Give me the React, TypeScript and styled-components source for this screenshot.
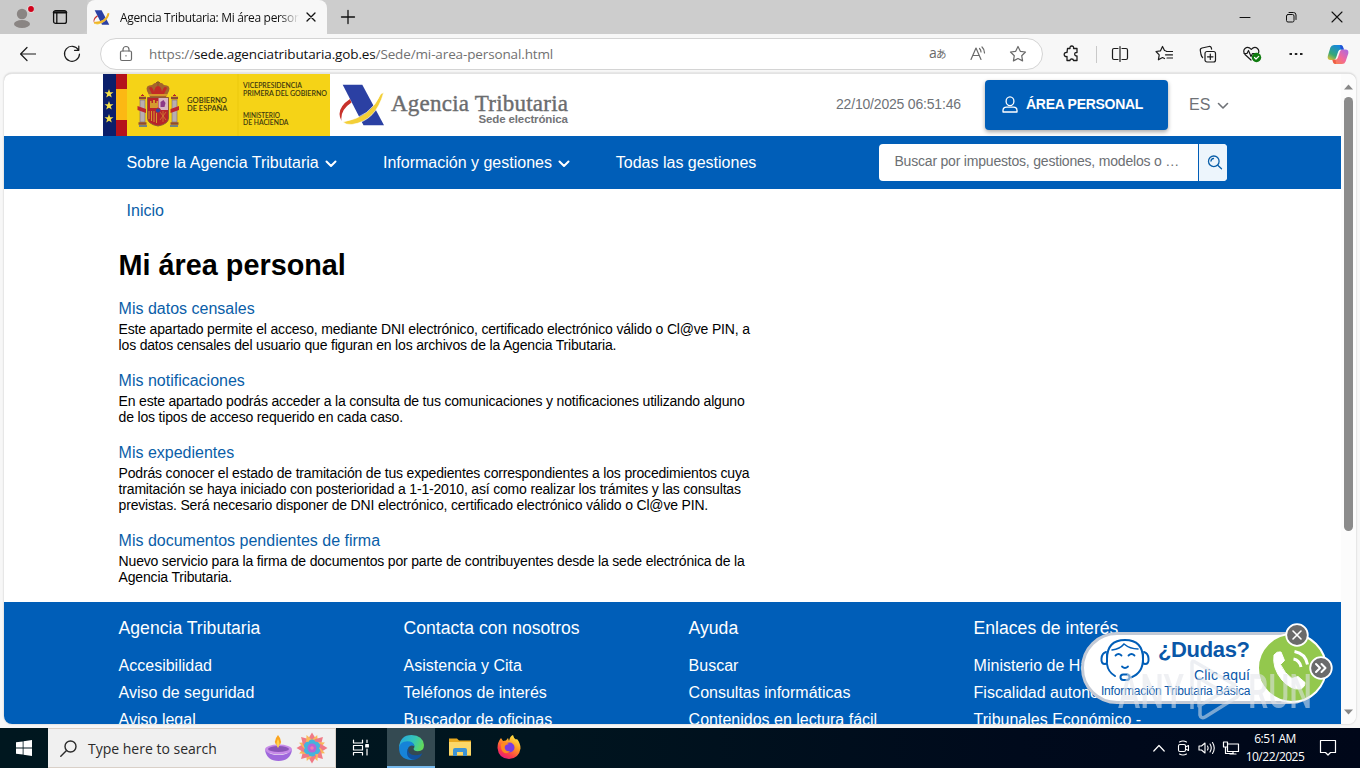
import React from "react";
import styled, { createGlobalStyle } from "styled-components";

const GlobalStyle = createGlobalStyle`
  * { box-sizing: border-box; }
  body {
    margin: 0;
    overflow: hidden;
    font-family: "Liberation Sans", Arial, sans-serif;
  }
`;

const BLUE = "#005eb8";
const UI_FONT = `"Open Sans", "Noto Sans", sans-serif`;

const Screen = styled.div`
  width: 1360px;
  height: 768px;
  display: flex;
  flex-direction: column;
  background: #f7f7f7;
  overflow: hidden;
`;

/* ---------- browser chrome ---------- */

const TabStrip = styled.div`
  height: 34px;
  display: flex;
  align-items: center;
  background: #cdcdcd;
  color: #111;
  font-family: ${UI_FONT};
`;

const Cell = styled.div<{ $w: number }>`
  width: ${(p) => p.$w}px;
  height: 100%;
  flex: none;
  display: flex;
  align-items: center;
  justify-content: center;
`;

const Profile = styled.div`
  width: 87px;
  height: 34px;
  display: flex;
  background: #c9c9c9;
  border-bottom-right-radius: 7px;
`;

const Tab = styled.div`
  width: 240px;
  height: 34px;
  display: flex;
  align-items: center;
  padding: 0 5px 0 6px;
  background: #f7f7f7;
  border-radius: 8px 8px 0 0;
`;

const TabTitle = styled.div`
  width: 180px;
  margin-left: 10px;
  overflow: hidden;
  white-space: nowrap;
  font-size: 12px;
  letter-spacing: -0.33px;
  mask-image: linear-gradient(90deg, #000 160px, transparent 179px);
`;

const WindowButtons = styled.div`
  display: flex;
  height: 100%;
  margin-left: auto;
`;

const Toolbar = styled.div`
  height: 39px;
  display: flex;
  align-items: center;
  padding: 1px 0 0 6px;
  color: #1b1b1b;
`;

const AddressBar = styled.div`
  width: 943px;
  height: 32px;
  display: flex;
  align-items: center;
  margin: 0 6px 0 6px;
  padding: 0 4px 0 16px;
  background: #fff;
  border: 1px solid #d4d4d4;
  border-radius: 16px;
  color: #6a6a6a;
  font-family: ${UI_FONT};
`;

const Url = styled.div`
  flex: 1;
  margin-left: 14px;
  font-size: 13.5px;
  letter-spacing: -0.13px;
  white-space: nowrap;
  color: #717171;

  b {
    font-weight: 400;
    color: #111;
  }
`;

const Divider = styled.div`
  width: 1px;
  height: 17px;
  margin: 0 0 0 3px;
  background: #c9c9c9;
`;

/* ---------- page ---------- */

const Viewport = styled.div`
  position: relative;
  height: 651px;
  margin: 0 4px;
  display: flex;
  overflow: hidden;
  background: #fff;
  border-top: 1px solid #e3e3e3;
  border-radius: 8px;
  box-shadow: 0 0 2px #bbb;
`;

const Page = styled.div`
  width: 1337px;
  overflow: hidden;
`;

const ScrollTrack = styled.div`
  width: 15px;
  display: flex;
  flex-direction: column;
  align-items: center;
  justify-content: space-between;
  padding: 10px 0 9px;
  background: #fcfcfc;
`;

const ScrollThumb = styled.div`
  width: 9px;
  height: 434px;
  margin: 7px 0 auto;
  border-radius: 5px;
  background: #8b8b8b;
`;

const Header = styled.header`
  height: 62px;
  display: flex;
  align-items: center;
  padding-left: 99px;
`;

const Clock = styled.div`
  width: 149px;
  margin-left: 266px;
  padding-bottom: 2px;
  font-size: 14px;
  letter-spacing: -0.19px;
  color: #6f7277;
`;

const PersonalButton = styled.button`
  width: 183px;
  height: 50px;
  display: flex;
  align-items: center;
  gap: 8px;
  padding: 0 0 2px 17px;
  border: 0;
  border-radius: 4px;
  background: ${BLUE};
  box-shadow: 0 2px 4px rgba(0, 0, 0, 0.35);
  color: #fff;
  font: bold 14px "Liberation Sans", Arial, sans-serif;
  letter-spacing: -0.29px;
  white-space: nowrap;
`;

const Language = styled.div`
  display: flex;
  align-items: center;
  gap: 7px;
  margin-left: 21px;
  font-size: 16px;
  color: #6f7277;
`;

const Nav = styled.nav`
  height: 53px;
  display: flex;
  align-items: center;
  padding-left: 122.6px;
  background: ${BLUE};
  color: #fff;
`;

const NavItem = styled.div<{ $w: number }>`
  width: ${(p) => p.$w}px;
  display: flex;
  align-items: center;
  gap: 6px;
  font-size: 16px;
  white-space: nowrap;
`;

const SearchBox = styled.div`
  width: 348px;
  height: 37px;
  display: flex;
  border-radius: 4px;
  overflow: hidden;
  background: #fff;
`;

const SearchInput = styled.div`
  width: 320px;
  padding: 0 0 3px 15.5px;
  display: flex;
  align-items: center;
  border-right: 1px solid ${BLUE};
  font-size: 14px;
  letter-spacing: -0.2px;
  color: #6c6f73;
  white-space: nowrap;
`;

const SearchButton = styled.div`
  flex: 1;
  display: flex;
  align-items: center;
  justify-content: center;
  background: #edf5fc;
  padding-left: 4px;
`;

const Breadcrumb = styled.div`
  height: 42px;
  padding-left: 122.6px;
  font-size: 16px;
  line-height: 43px;
  color: #0a5ea8;
`;

const Main = styled.main`
  height: 371px;
  padding: 16px 0 0 114.6px;
`;

const Title = styled.h1`
  margin: 0 0 16px;
  font-size: 28.8px;
  line-height: 36px;
  color: #000;
`;

const Entry = styled.section`
  width: 660px;
  margin-bottom: 18px;
`;

const EntryLink = styled.a`
  display: block;
  margin-bottom: 2px;
  font-size: 16px;
  line-height: 20px;
  color: #0a5ea8;
`;

const EntryText = styled.p`
  margin: 0;
  font-size: 14px;
  letter-spacing: -0.181px;
  line-height: 16px;
  white-space: pre-line;
  color: #000;
`;

const Footer = styled.footer`
  height: 130px;
  display: grid;
  grid-template-columns: repeat(4, 285px);
  padding: 15px 0 0 114.6px;
  background: ${BLUE};
  color: #fff;
`;

const FooterTitle = styled.div`
  height: 35px;
  font-size: 17.6px;
  line-height: 22px;
`;

const FooterLink = styled.div`
  font-size: 16px;
  line-height: 27px;
`;

/* floating help pill, over the footer */

const HelpPill = styled.div`
  position: absolute;
  left: 1076px;
  top: 547px;
  width: 256px;
  height: 104px;

  svg {
    display: block;
  }
`;

/* ---------- taskbar ---------- */

const Taskbar = styled.div`
  height: 40px;
  margin-top: 4px;
  display: flex;
  background: linear-gradient(90deg, #00171f 0%, #00151f 40%, #000a1c 75%, #000719 100%);
  color: #fff;
  font-family: ${UI_FONT};
`;

const TaskSearch = styled.div`
  width: 288px;
  display: flex;
  align-items: center;
  padding: 0 7px 0 12px;
  background: #f0f0f0;
  border: 1px solid #d9d0c8;
  border-left: 0;
  color: #2b2b2b;
  font-size: 14px;
`;

const TaskLabel = styled.span`
  flex: 1;
  margin-left: 11px;
  white-space: nowrap;
`;

const TaskApp = styled.div<{ $active?: boolean }>`
  width: ${(p) => (p.$active ? 48 : 49)}px;
  height: 40px;
  display: flex;
  align-items: center;
  justify-content: center;
  background: ${(p) => (p.$active ? "#344a52" : "transparent")};
  border-bottom: 2px solid ${(p) => (p.$active ? "#76b9ed" : "transparent")};
`;

const Tray = styled.div`
  display: flex;
  margin-left: auto;
`;

const TrayClock = styled.div`
  width: 64px;
  padding: 2px 0 0 0;
  font-size: 12px;
  line-height: 18px;
  letter-spacing: -0.5px;
  text-align: center;
  white-space: nowrap;
`;

type IconProps = {
  size?: number;
  w?: number;
  stroke?: number;
  children: React.ReactNode;
};

const Icon = ({ size = 18, w = size, stroke = 1.2, children }: IconProps) => (
  <svg
    width={w}
    height={size}
    viewBox={`0 0 ${w} ${size}`}
    fill="none"
    stroke="currentColor"
    strokeWidth={stroke}
    strokeLinecap="round"
    strokeLinejoin="round"
  >
    {children}
  </svg>
);

const Chevron = ({ stroke = 2 }: { stroke?: number }) => (
  <Icon size={12} stroke={stroke}>
    <path d="M1.500 4.500l4.500 4.500L10.500 4.500" />
  </Icon>
);

const GovLogo = () => (
  <svg width="227" height="62" viewBox="0 0 227 62">
    <rect width="227" height="62" fill="#f5d317" />
    <path d="M135 0v62" stroke="#ebc90f" />
    <rect width="13" height="62" fill="#0b1f6b" />
    {[19.5, 31.5, 44.5].map((y) => (
      <path
        key={y}
        transform={`translate(6 ${y})`}
        d="M0-4.500l1.100 3.200 3.400.1-2.700 2 1 3.300L0 2.200l-2.800 1.900 1-3.300-2.700-2 3.400-.1z"
        fill="#f4e04a"
      />
    ))}
    <rect x="13" width="11" height="62" fill="#b5121b" />
    <rect x="13" y="15" width="11" height="31" fill="#fcb813" />

    {/* coat of arms */}
    <g>
      <path d="M44 17q-2-6 5-6 3-3 6-2 4-1 6 2 7 0 5 6l-3 6H47z" fill="#a5642c" />
      <path d="M46 14q3-3 5 4 1-6 4-6t4 6q2-7 5-4l-3 6H49z" fill="#c22a26" />
      <path d="M55 7v5M53 8.500h4" stroke="#8a5a28" strokeWidth="1.200" />
      <path d="M46 21h18" stroke="#d8952b" strokeWidth="2" />
      <path d="M44.500 23.500h21V44q0 6-10.500 8-10.500-2-10.500-8z" fill="#b8242a" stroke="#8f5a35" />
      <path d="M55.500 24h9.500v12h-9.500z" fill="#d8b4c2" />
      <path d="M57.500 33v-5l3-2 2 3-1 4z" fill="#8c3a86" />
      <path d="M47 34v-7h1.500v2h1.500v-3h2v3h1.500v-2H55v7z" fill="#d59a2e" />
      <path d="M46 37v8M48.500 37v10M51 37v11M53.500 37v12" stroke="#d59a2e" strokeWidth="1" />
      <path d="M57 38l6 8M63 38l-6 8M60 37v11" stroke="#cd7f30" strokeWidth=".8" />
      <circle cx="55" cy="36.500" r="2.500" fill="#31479c" stroke="#c22" strokeWidth=".8" />
      <path d="M37 26h5v22h-5zM69 26h5v22h-5z" fill="#b9aeb0" stroke="#7d6a70" strokeWidth=".6" />
      <path d="M34.500 32l8.500 3v4l-8.500-3zM67.500 35l8.500-3v4l-8.500 3z" fill="#bd2730" />
      <path d="M36 24h7M68 24h7M35.500 49.500h8M67.500 49.500h8" stroke="#8d4a36" strokeWidth="2.500" />
      <path d="M36 52h8M67 52h8" stroke="#4a6ba8" strokeWidth="1.500" />
      <path d="M38 22q1.500-3 3 0M70 22q1.500-3 3 0" fill="#b8242a" stroke="#b8242a" />
    </g>

    <g fontFamily="Lato, sans-serif" fontSize="7.400" fontWeight="600" fill="#3d380f">
      <text x="84" y="29" textLength="40" lengthAdjust="spacingAndGlyphs">GOBIERNO</text>
      <text x="84" y="36.700" textLength="40.500" lengthAdjust="spacingAndGlyphs">DE ESPAÑA</text>
      <text x="140" y="13.600" textLength="59" lengthAdjust="spacingAndGlyphs">VICEPRESIDENCIA</text>
      <text x="140" y="21.500" textLength="84" lengthAdjust="spacingAndGlyphs">PRIMERA DEL GOBIERNO</text>
      <text x="140" y="43.600" textLength="37" lengthAdjust="spacingAndGlyphs">MINISTERIO</text>
      <text x="140" y="51.300" textLength="45.500" lengthAdjust="spacingAndGlyphs">DE HACIENDA</text>
    </g>
  </svg>
);

const AgencyMark = () => (
  <>
    <path d="M4.700 10.700h19.600L46 51.300H25.500z" fill="#2b40a3" />
    <path d="M12 25Q-3 35 3.500 47q-1.500-11 10-18.500z" fill="#c8322b" />
    <path
      d="M45.700 18.500l-3 1.500Q33 43 5 48q3 3 9 2.500Q38 47 45.700 18.500z"
      fill="#f3cf37"
      stroke="#fff"
      strokeWidth=".6"
    />
  </>
);

const AgencyLogo = () => (
  <svg width="232" height="62" viewBox="0 0 232 62" style={{ marginLeft: 8 }}>
    <AgencyMark />
    <text
      x="53"
      y="37.300"
      fontFamily="Liberation Serif, serif"
      fontSize="23"
      fill="#6b6c6e"
      stroke="#6b6c6e"
      strokeWidth=".4"
      textLength="177"
    >
      Agencia Tributaria
    </text>
    <text
      x="140.500"
      y="49"
      fontFamily="Liberation Sans, sans-serif"
      fontSize="11.500"
      fontWeight="700"
      fill="#737477"
      textLength="89.500"
    >
      Sede electrónica
    </text>
  </svg>
);

const HelpWidget = () => (
  <HelpPill>
    <svg width="256" height="104" viewBox="1080 621 256 104">
      <rect x="1082.500" y="633.500" width="242" height="69" rx="34.500" fill="#fff" stroke="#c3cad6" strokeWidth="3" />
      <circle cx="1292" cy="668" r="34" fill="#93c84d" stroke="#fff" strokeWidth="2" />

      {/* operator face */}
      <g fill="none" stroke={BLUE} strokeWidth="2" strokeLinecap="round">
        <path d="M1107 659q0-19 18-19t18 19q0 14-12 18.500" />
        <path d="M1106 652q-4 1-4.500 6.500t3.500 5.500q2 0 2-2v-8M1144 652q4 1 4.500 6.500t-3.500 5.500q-2 0-2-2v-8" />
        <path d="M1107 664q1 8 8 12" />
        <path d="M1112 650q8-1 12-6 6 5 14 5" strokeWidth="1.500" />
        <path d="M1115.500 655.500q3-3 6 0M1128.500 655.500q3-3 6 0M1122 666.500q3 3 6 0" strokeWidth="1.800" />
        <rect x="1120.500" y="674.500" width="9" height="5.500" rx="2.700" />
      </g>

      <g fontFamily="Liberation Sans, sans-serif" fill="#0a57a8">
        <text x="1158" y="656.500" fontSize="22" fontWeight="700" textLength="92">¿Dudas?</text>
        <text x="1194" y="680" fontSize="14" textLength="56">Clic aquí</text>
        <text x="1101" y="695" fontSize="12" textLength="149.500">Información Tributaria Básica</text>
      </g>

      {/* handset */}
      <path
        d="M1274 655q3-4 7-3l3.500 8.500-4 4q4 9 11.500 14l6-2 7 6q0 5-5 6.500-9 1-18-9-10-12-8-25z"
        fill="#fff"
        stroke="#fff"
        strokeLinejoin="round"
      />
      <path d="M1293.500 659q6 1 7.500 8M1294.500 651.500q11 2 13 13" fill="none" stroke="#fff" strokeWidth="3" />

      {/* ANY.RUN watermark */}
      <g opacity=".55" fill="#e2e5eb">
        <g fontFamily="Roboto, sans-serif" fontSize="49" fontWeight="500">
          <text x="1118" y="707.500" textLength="66" lengthAdjust="spacingAndGlyphs">ANY</text>
          <text x="1248" y="707.500" textLength="64" lengthAdjust="spacingAndGlyphs">RUN</text>
        </g>
        <g fill="none" stroke="#dfe3ea" strokeWidth="3.500" strokeLinejoin="round">
          <path d="M1192 709v-46q0-3 3-1l40 23-36 21v-28l20 12" />
          <path d="M1200 706v9q1 4 5 2l32-20q3-3 0-6l-7-4" />
        </g>
      </g>

      <g stroke="#fff" strokeLinecap="round" strokeLinejoin="round" fill="none">
        <circle cx="1297" cy="635" r="10.800" fill="#6b6b6b" strokeWidth="1.800" />
        <path d="M1293 631l8 8M1301 631l-8 8" strokeWidth="1.600" />
        <circle cx="1321" cy="668" r="10.800" fill="#6b6b6b" strokeWidth="1.800" />
        <path d="M1316 664l4 4-4 4M1321.500 664l4 4-4 4" strokeWidth="2" />
      </g>
    </svg>
  </HelpPill>
);

const CopilotIcon = () => (
  <svg width="22" height="21" viewBox="0 0 22 21">
    <defs>
      <linearGradient id="cpA" x1="0" y1="1" x2=".6" y2="0">
        <stop offset="0" stopColor="#f5c52e" />
        <stop offset=".4" stopColor="#37a877" />
        <stop offset="1" stopColor="#1587e0" />
      </linearGradient>
      <linearGradient id="cpB" x1="1" y1="0" x2="0" y2="1">
        <stop offset="0" stopColor="#a468e8" />
        <stop offset=".5" stopColor="#f2679c" />
        <stop offset="1" stopColor="#f98a3a" />
      </linearGradient>
    </defs>
    <path d="M7 1h6.500q2 0 2.500 2l.8 2.500h-3q-2 0-2.600 2L9 14q-.6 2-2.500 2H3.500Q0 16 .8 12l2.600-8.500Q4.300 1 7 1z" fill="url(#cpA)" />
    <path d="M15 20H8.500Q6.500 20 6 18l-.5-2.300h2.700q2 0 2.600-2L13 7.500q.6-2 2.500-2H18.500q3.500 0 2.800 4L18.600 17.500Q17.700 20 15 20z" fill="url(#cpB)" />
    <path d="M13 1q2.500 0 3 2l.8 2.500h-3z" fill="#2450d8" />
    <path d="M5.500 15.700h3L9 20q-2.500 0-3-2z" fill="#ee5b46" />
  </svg>
);

const EdgeIcon = () => (
  <svg width="25" height="25" viewBox="0 0 24 24">
    <defs>
      <linearGradient id="edA" x1="0" x2="1" y1=".2" y2=".5">
        <stop offset="0" stopColor="#25a8e0" />
        <stop offset=".6" stopColor="#36c6b5" />
        <stop offset="1" stopColor="#62d95a" />
      </linearGradient>
    </defs>
    <path d="M0 12Q1 0 12 0q11 .5 12 9.500 0 6-6 6-4 0-4-2.500 1-1 .8-2.500Q14 7 9 7q-6 0-9 5z" fill="url(#edA)" />
    <path d="M0 12q1.500-6 8-6 6 0 6.800 4.500Q11 9 9 12q-2 5 2 9 2 2.500 5 2.300Q13 24 11 24 0 23 0 12z" fill="#1683d8" />
    <path d="M9 12.500q-1.500 7 7 7 3.500 0 6.500-2-2.500 5-7 6.200Q6 23.500 8 14z" fill="#12529f" />
  </svg>
);

const FolderIcon = () => (
  <svg width="22" height="20" viewBox="0 0 22 20">
    <path d="M0 1.500h8l2 2h12v15H0z" fill="#e9a91f" />
    <path d="M0 5h22v13.500H0z" fill="#fcd768" />
    <path d="M4 19v-6q0-2 2-2h10q2 0 2 2v6h-4v-4H8v4z" fill="#3d93d4" />
  </svg>
);

const FirefoxIcon = () => (
  <svg width="24" height="24" viewBox="0 0 24 24">
    <defs>
      <linearGradient id="ffA" x1=".8" y1="0" x2=".2" y2="1">
        <stop offset="0" stopColor="#fff04a" />
        <stop offset=".4" stopColor="#ff9822" />
        <stop offset=".75" stopColor="#fb3b4b" />
        <stop offset="1" stopColor="#e31587" />
      </linearGradient>
    </defs>
    <path d="M4 3l2 3 3-.5L11 3l1 3q1-5 4-6 .5 3 3 4.500L20 4q3.500 4 3.500 9.500Q22 23.500 12 24 1.500 23.500.5 13 .5 7 4 3z" fill="url(#ffA)" />
    <circle cx="12.500" cy="12.500" r="5" fill="#7a3be0" />
    <path d="M4 9q4-3 8 0-4 .5-4.500 3Q8 17 13 16q-3 4-7 1-2.500-3-2-8z" fill="#ff8a1f" />
  </svg>
);

// diya lamp and rangoli, the search box seasonal art
const SearchArt = () => (
  <svg width="64" height="34" viewBox="0 0 64 34">
    <path d="M14 4q6 7 0 12-6-5 0-12z" fill="#fba51e" />
    <ellipse cx="14.500" cy="18.500" rx="13.500" ry="5" fill="#c78be8" />
    <ellipse cx="14.500" cy="18" rx="10.500" ry="3" fill="#8a55b8" />
    <path d="M1 19q2 11 13.500 11T28 19q-4 5-13.500 5T1 19z" fill="#9f68dc" />
    <path d="M14 8q3 5 0 9-3-4 0-9z" fill="#ffd34e" />
    <g transform="translate(48 17)">
      {[0, 45, 90, 135, 180, 225, 270, 315].map((a) => (
        <g key={a} transform={`rotate(${a})`}>
          <path d="M0-15.500l4.500 7.500-4.500 5-4.500-5z" fill="#f07a86" />
          <path d="M0-14l3.500 7-3.500 5-3.500-5z" transform="rotate(22)" fill="#f9b95a" />
        </g>
      ))}
      {[0, 60, 120, 180, 240, 300].map((a) => (
        <circle key={a} r="3.600" cy="-5" transform={`rotate(${a})`} fill="#43b4dd" />
      ))}
      <circle r="4.500" fill="#b764d4" />
      <circle r="1.800" fill="#f07ab0" />
    </g>
  </svg>
);

const entries = [
  {
    title: "Mis datos censales",
    text: "Este apartado permite el acceso, mediante DNI electrónico, certificado electrónico válido o Cl@ve PIN, a\nlos datos censales del usuario que figuran en los archivos de la Agencia Tributaria.",
  },
  {
    title: "Mis notificaciones",
    text: "En este apartado podrás acceder a la consulta de tus comunicaciones y notificaciones utilizando alguno\nde los tipos de acceso requerido en cada caso.",
  },
  {
    title: "Mis expedientes",
    text: "Podrás conocer el estado de tramitación de tus expedientes correspondientes a los procedimientos cuya\ntramitación se haya iniciado con posterioridad a 1-1-2010, así como realizar los trámites y las consultas\nprevistas. Será necesario disponer de DNI electrónico, certificado electrónico válido o Cl@ve PIN.",
  },
  {
    title: "Mis documentos pendientes de firma",
    text: "Nuevo servicio para la firma de documentos por parte de contribuyentes desde la sede electrónica de la\nAgencia Tributaria.",
  },
];

const footerColumns = [
  { title: "Agencia Tributaria", links: ["Accesibilidad", "Aviso de seguridad", "Aviso legal"] },
  { title: "Contacta con nosotros", links: ["Asistencia y Cita", "Teléfonos de interés", "Buscador de oficinas"] },
  { title: "Ayuda", links: ["Buscar", "Consultas informáticas", "Contenidos en lectura fácil"] },
  { title: "Enlaces de interés", links: ["Ministerio de Hacienda", "Fiscalidad autonómica", "Tribunales Económico -"] },
];

const BrowserTabs = () => (
  <TabStrip>
    <Profile>
      <Cell $w={44}>
        <svg width="24" height="24" viewBox="0 0 24 24">
          <circle cx="12" cy="9" r="5.200" fill="#8a8583" />
          <ellipse cx="12" cy="19" rx="8" ry="4" fill="#8a8583" />
          <circle cx="21" cy="4" r="3.800" fill="#eadada" />
          <circle cx="21" cy="4" r="2.900" fill="#d0021b" />
        </svg>
      </Cell>
      <Cell $w={32}>
        <Icon size={16} stroke={1.3}>
          <rect x="1.600" y="1.600" width="12.800" height="12.800" rx="2" />
          <path d="M2 3.400h12" strokeWidth="2.400" />
          <path d="M4.800 4v10" />
        </Icon>
      </Cell>
    </Profile>
    <Tab>
      <svg width="17" height="17" viewBox="0 8 48 46">
        <AgencyMark />
        <path d="M3 46q36 0 41-27" fill="none" stroke="#f0b429" strokeWidth="5" />
      </svg>
      <TabTitle>Agencia Tributaria: Mi área personal - Sede</TabTitle>
      <Cell $w={22}>
        <Icon size={12} stroke={1.3}>
          <path d="M2 2l8 8M10 2l-8 8" />
        </Icon>
      </Cell>
    </Tab>
    <Cell $w={42}>
      <Icon size={16} stroke={1.3}>
        <path d="M8 1.500v13M1.500 8h13" />
      </Icon>
    </Cell>
    <WindowButtons>
      <Cell $w={46}>
        <Icon size={12} stroke={1}>
          <path d="M1 6.500h10" />
        </Icon>
      </Cell>
      <Cell $w={46}>
        <Icon size={12} stroke={1}>
          <rect x="1.500" y="3.500" width="7.500" height="7.500" rx="1.500" />
          <path d="M4 1.500h4.500q2.500 0 2.500 2.500V8.500" />
        </Icon>
      </Cell>
      <Cell $w={46}>
        <Icon size={12} stroke={1.1}>
          <path d="M1 1l10 10M11 1L1 11" />
        </Icon>
      </Cell>
    </WindowButtons>
  </TabStrip>
);

const BrowserToolbar = () => (
  <Toolbar>
    <Cell $w={44}>
      <Icon size={16}>
        <path d="M15.500 8H.8M7 1.500L.6 8 7 14.500" />
      </Icon>
    </Cell>
    <Cell $w={44}>
      <Icon size={18}>
        <path d="M15.500 5A7.500 7.500 0 1 0 16.500 9M15.800 1v4.300h-4.300" />
      </Icon>
    </Cell>
    <AddressBar>
      <Icon size={18}>
        <rect x="3.500" y="6" width="11" height="9.500" rx="1.500" />
        <path d="M6 6V4.500a3 3 0 0 1 6 0V6M9 10.500v.5" />
      </Icon>
      <Url>
        https://<b>sede.agenciatributaria.gob.es</b>/Sede/mi-area-personal.html
      </Url>
      <Cell $w={40}>
        <svg width="20" height="16" viewBox="0 0 20 16" fill="currentColor">
          <text x="1" y="12" fontSize="14" fontFamily="Open Sans, sans-serif">a</text>
          <text x="8" y="12" fontSize="10.500" fontFamily="Noto Sans CJK JP, sans-serif">あ</text>
        </svg>
      </Cell>
      <Cell $w={40}>
        <Icon size={18}>
          <path d="M2 14.500L7 3l5 11.500M3.700 10.500h6.600M10.500 3.500q1.500 1.500 1.500 3.500M13 2q2.700 2.500 2.500 6" />
        </Icon>
      </Cell>
      <Cell $w={40}>
        <Icon size={18}>
          <path d="M9 1.500l2.300 4.800 5.200.7-3.800 3.700.9 5.200L9 13.500l-4.600 2.400.9-5.200L1.500 7l5.200-.7z" />
        </Icon>
      </Cell>
    </AddressBar>
    <Cell $w={44}>
      <Icon size={18} stroke={1.3}>
        <path d="M5.500 3.500H8q-.3-2.500 1.800-2.500t1.800 2.500h3.400v4q-2.300-.2-2.300 1.700T15 11v4.500h-3.500q0-1.500-1.800-1.500T8 15.500H5V11.500q-2.800.3-2.800-2T5 7.500z" />
      </Icon>
    </Cell>
    <Divider />
    <Cell $w={45}>
      <Icon size={18}>
        <path d="M7 3.500H3Q1.500 3.500 1.500 5v8q0 1.500 1.500 1.500h4M11 3.500h4q1.500 0 1.500 1.500v8q0 1.500-1.500 1.500h-4M9 1.500v15" />
      </Icon>
    </Cell>
    <Cell $w={44}>
      <Icon size={18}>
        <path d="M11 6L9.500 5.500 7.500 1.500l-2 4.300L1 6.500l3.200 3.300-.8 5L7.500 12.500l2 1M11.500 6.500h6M10.500 9.800h7M12 13h5.500" />
      </Icon>
    </Cell>
    <Cell $w={44}>
      <Icon size={18}>
        <rect x="6" y="6.500" width="10.500" height="10.500" rx="2" />
        <path d="M11.300 9v5.500M8.500 11.800H14M3.600 12.500Q2.500 11.500 2 9.500L1.300 5.500Q1 3.500 3 3l7-1.500q1.800-.3 2.300 1.300l.3 1.300" />
      </Icon>
    </Cell>
    <Cell $w={44}>
      <Icon size={18} w={20}>
        <path d="M9 15L3 9.500Q.5 6 3 3.500 6 1 9.300 4.300 12.500 1 15.500 3.500 17.500 5.500 16.500 8M2 8.500h3l1.500-3 2.500 6 1.500-3H13" />
        <circle cx="14.500" cy="12.500" r="4.700" fill="#107c10" stroke="none" />
        <path d="M12.500 12.500l1.500 1.500 2.700-2.700" stroke="#fff" />
      </Icon>
    </Cell>
    <Cell $w={44}>
      <svg width="14" height="4" viewBox="0 0 14 4">
        <path d="M.5 1h2.500v2H.5zM5.800 1h2.500v2H5.800zM11 1h2.500v2H11z" fill="#222" />
      </svg>
    </Cell>
    <Cell $w={40}>
      <CopilotIcon />
    </Cell>
  </Toolbar>
);

const SitePage = () => (
  <Page>
    <Header>
      <GovLogo />
      <AgencyLogo />
      <Clock>22/10/2025 06:51:46</Clock>
      <PersonalButton>
        <Icon size={18} w={16} stroke={1.3}>
          <ellipse cx="8" cy="6.200" rx="3.900" ry="4.400" />
          <path d="M1 17v-1.500q0-3.300 3.500-3.300h7q3.500 0 3.500 3.300v1.500z" />
        </Icon>
        ÁREA PERSONAL
      </PersonalButton>
      <Language>
        ES <Chevron stroke={1.6} />
      </Language>
    </Header>
    <Nav>
      <NavItem $w={256.4}>
        Sobre la Agencia Tributaria <Chevron />
      </NavItem>
      <NavItem $w={232.8}>
        Información y gestiones <Chevron />
      </NavItem>
      <NavItem $w={263.2}>Todas las gestiones</NavItem>
      <SearchBox>
        <SearchInput>Buscar por impuestos, gestiones, modelos o …</SearchInput>
        <SearchButton>
          <Icon size={16} stroke={1.3}>
            <circle cx="6.800" cy="6.300" r="5.300" stroke="#0a5ea8" />
            <path d="M4 6Q4.300 3.700 6.500 3.500M11 10.500l3.500 3.300" stroke="#0a5ea8" />
          </Icon>
        </SearchButton>
      </SearchBox>
    </Nav>
    <Breadcrumb>Inicio</Breadcrumb>
    <Main>
      <Title>Mi área personal</Title>
      {entries.map((e) => (
        <Entry key={e.title}>
          <EntryLink>{e.title}</EntryLink>
          <EntryText>{e.text}</EntryText>
        </Entry>
      ))}
    </Main>
    <Footer>
      {footerColumns.map((c) => (
        <div key={c.title}>
          <FooterTitle>{c.title}</FooterTitle>
          {c.links.map((l) => (
            <FooterLink key={l}>{l}</FooterLink>
          ))}
        </div>
      ))}
    </Footer>
  </Page>
);

const WindowsTaskbar = () => (
  <Taskbar>
    <Cell $w={48}>
      <svg width="16" height="16" viewBox="0 0 16 16" fill="#fff">
        <path d="M0 2.300l6.700-.9v6.100H0zM7.500 1.200L16 0v7.500H7.500zM0 8.400h6.700v6.200L0 13.700zM7.500 8.400H16V16l-8.500-1.200z" />
      </svg>
    </Cell>
    <TaskSearch>
      <Icon size={17} stroke={1.4}>
        <circle cx="10.500" cy="6.500" r="5.500" />
        <path d="M6.500 10.500L.8 16.200" />
      </Icon>
      <TaskLabel>Type here to search</TaskLabel>
      <SearchArt />
    </TaskSearch>
    <Cell $w={51}>
      <Icon size={18} w={20} stroke={1.2}>
        <path d="M1.500 1v3h9V1M1.500 16v-2.500h9V16M1.500 6.500h9v4.500h-9zM15 1v2.500M15 10v6" />
        <path d="M13.800 5.500h2.500v2.500h-2.500z" fill="currentColor" />
      </Icon>
    </Cell>
    <TaskApp $active>
      <EdgeIcon />
    </TaskApp>
    <TaskApp>
      <FolderIcon />
    </TaskApp>
    <TaskApp>
      <FirefoxIcon />
    </TaskApp>
    <Tray>
      <Cell $w={24}>
        <Icon size={12} stroke={1.2}>
          <path d="M.8 9L6 3.500 11.200 9" />
        </Icon>
      </Cell>
      <Cell $w={24}>
        <Icon size={16} stroke={1.1}>
          <rect x="3.500" y="4.500" width="7" height="7" rx="1.500" />
          <path d="M10.500 7l3-1.500v5l-3-1.500M4.500 2q3.500-2 7 0M4.500 14q3.500 2 7 0" />
        </Icon>
      </Cell>
      <Cell $w={24}>
        <Icon size={16} w={18} stroke={1.1}>
          <path d="M1 6v4h2.500L7 13V3L3.500 6zM9.500 6q1.200 2 0 4M12 4q2.500 4 0 8M14.500 2.500q3.500 5.500 0 11" />
        </Icon>
      </Cell>
      <Cell $w={24}>
        <Icon size={16} w={18} stroke={1.2}>
          <path d="M6 4h10.500v7.500h-11V7M1.500 2h4v5h-4zM3.500 7v6.500h8M11 11.500v2.500M8 14h6" />
        </Icon>
      </Cell>
      <TrayClock>
        6:51 AM
        <br />
        10/22/2025
      </TrayClock>
      <Cell $w={41}>
        <Icon size={18} stroke={1.2}>
          <path d="M1.500 1.500h15v12H11.500L9 16l-2.500-2.500h-5z" />
        </Icon>
      </Cell>
      <Cell $w={12} />
    </Tray>
  </Taskbar>
);

export default function App() {
  return (
    <Screen>
      <GlobalStyle />
      <BrowserTabs />
      <BrowserToolbar />
      <Viewport>
        <SitePage />
        <ScrollTrack>
          <svg width="9" height="6" viewBox="0 0 9 6">
            <path d="M4.500.5L9 5.500H0z" fill="#888" />
          </svg>
          <ScrollThumb />
          <svg width="9" height="6" viewBox="0 0 9 6">
            <path d="M4.500 5.500L9 .5H0z" fill="#888" />
          </svg>
        </ScrollTrack>
        <HelpWidget />
      </Viewport>
      <WindowsTaskbar />
    </Screen>
  );
}
